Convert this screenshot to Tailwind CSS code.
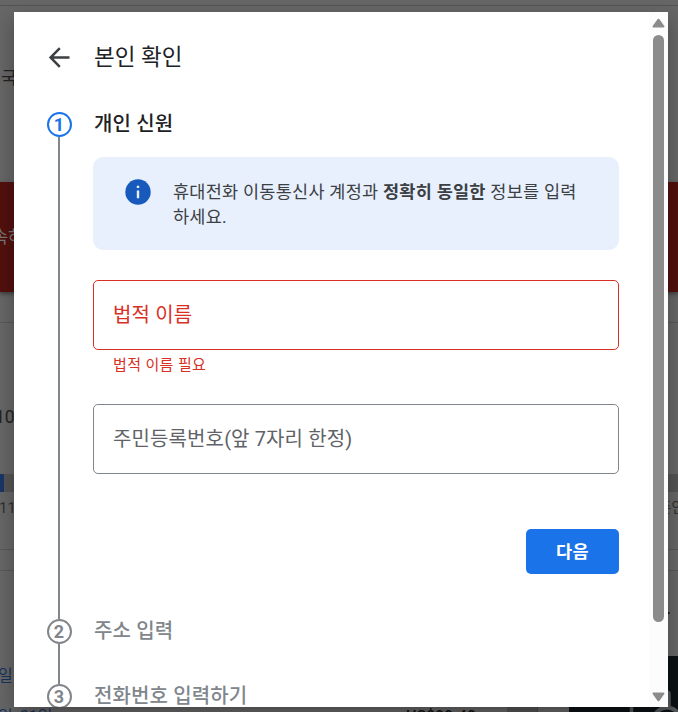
<!DOCTYPE html>
<html lang="ko">
<head>
<meta charset="utf-8">
<title>본인 확인</title>
<script src="https://cdn.jsdelivr.net/npm/@tailwindcss/browser@4"></script>
</head>
<body class="relative h-[712px] w-[678px] overflow-hidden bg-[#666] font-[Roboto,'Noto_Sans_CJK_KR',sans-serif]">

<!-- Dimmed page -->
<div aria-hidden="true" class="flex h-[712px] w-[678px] flex-col overflow-hidden whitespace-nowrap text-[#222]">
  <div class="h-[6px] shrink-0 border-b border-[#545454]"></div>
  <div class="flex h-[176px] shrink-0 items-start pt-[60px] pl-[1px] text-[17.5px] leading-[25px]">국</div>
  <div class="flex h-[110px] shrink-0 items-center bg-[#52100e] text-[17.5px] text-[#777] shadow-[0_2px_4px_rgba(0,0,0,0.4)]"><span class="-ml-[8px]">속하</span></div>
  <div class="h-[31px] shrink-0 border-b border-[#585858]"></div>
  <div class="flex h-[151px] shrink-0 items-start pt-[82px] text-[17.5px] leading-[25px]"><span class="-ml-[5px]">10</span></div>
  <div class="flex h-[18px] shrink-0 bg-[#545454]"><div class="w-[4px] bg-[#1a3566]"></div></div>
  <div class="flex h-[58px] shrink-0 items-start justify-between border-b border-[#585858] pt-[6px] text-[15px] leading-[20px] text-[#303030]"><span class="-ml-[1px]">11</span><span class="-mr-[7px] text-[15px]">존인</span></div>
  <div class="h-[21px] shrink-0 border-b border-[#585858]"></div>
  <div class="flex h-[85px] shrink-0 items-start justify-end pt-[27px] leading-[20px]"><span class="mr-[7px] text-[17.5px] text-[#111]">.</span></div>
  <div class="flex h-[56px] shrink-0">
    <div class="w-[507px] shrink-0 pt-[8px] text-[#16335f]">
      <div class="-ml-[2px] text-[16px] leading-[24px]">일</div>
      <div class="mt-[17px] flex justify-between text-[16px] leading-[24px]"><span class="-ml-[2px]">일, 31일</span><span class="mr-[31px] text-[16px] font-medium text-[#111]">US$99.40</span></div>
    </div>
    <div class="mt-[51px] h-[5px] w-[31px] border-r border-[#4a4a4a] bg-[#545454]"></div>
    <div class="ml-[31px] flex w-[109px] items-end justify-end bg-[#0c1115]">
      <svg class="h-[56px] w-[50px]" viewBox="0 0 50 56" fill="none" stroke="#56595b" stroke-width="4"><path d="M3.5 56V38q0-2 2-2H39q2 0 2 2v13" stroke-width="3.5"/><circle cx="39" cy="65" r="13.5"/></svg>
    </div>
  </div>
</div>

<!-- Dialog -->
<main class="absolute top-[12px] left-[14px] flex h-[695px] w-[654px] overflow-hidden bg-white shadow-[0_8px_18px_rgba(0,0,0,0.3)]">
  <div class="flex w-[635px] shrink-0 flex-col whitespace-nowrap pr-[30px] pl-[32px]">
    <header class="flex h-[90px] shrink-0 items-center gap-[22px]">
      <svg class="ml-[1px] h-[25px] w-[25px]" viewBox="0 0 25 25" fill="none" stroke="#3c4043" stroke-width="2.5"><path d="M22.5 12.5H4M12.8 3.2 3.6 12.5l9.2 9.3"/></svg>
      <h1 class="text-[22.5px] leading-[30px] text-[#202124]">본인 확인</h1>
    </header>

    <section class="flex h-[507px] shrink-0 gap-[21px]">
      <div class="flex w-[26px] shrink-0 flex-col items-center pt-[10px]">
        <span class="flex size-[25px] shrink-0 items-center justify-center rounded-full border-2 border-[#1a73e8] text-[18px] font-bold text-[#1a73e8]">1</span>
        <div class="-ml-[1px] w-[2px] grow bg-[#80868b]"></div>
      </div>
      <div class="flex w-[526px] flex-col">
        <h2 class="pt-[7px] pl-px text-[20px] leading-[30px] font-medium tracking-[0.125px] text-[#202124]">개인 신원</h2>
        <div class="mt-[18px] flex h-[93px] rounded-[10px] bg-[#e8f0fe] pt-[22px] pl-[32px]">
          <svg class="h-[26px] w-[26px] shrink-0" viewBox="0 0 26 26"><circle cx="13" cy="13" r="12.7" fill="#185abc"/><path d="M11.8 6.7h2.4v2.4h-2.4zM11.8 11.6h2.4v7.6h-2.4z" fill="#e8f0fe"/></svg>
          <p class="mt-px ml-[22px] text-[17.5px] leading-[25px] tracking-[0.25px] text-[#3c4043]">휴대전화 이동통신사 계정과 <b>정확히 동일한</b> 정보를 입력<br>하세요.</p>
        </div>
        <div class="mt-[30px] flex h-[70px] items-center rounded-[5px] border border-[#d93025] pl-[19px] text-[20px] tracking-[0.125px] text-[#d93025]">법적 이름</div>
        <p class="mt-[5px] h-[19px] pl-[20px] text-[15px] leading-[20px] tracking-[0.375px] text-[#d93025]">법적 이름 필요</p>
        <div class="mt-[30px] flex h-[70px] items-center rounded-[5px] border border-[#80868b] pl-[19px] text-[20px] tracking-[0.125px] text-[#5f6368]">주민등록번호(앞 7자리 한정)</div>
        <button class="mt-[55px] h-[45px] w-[93px] self-end rounded-[5px] bg-[#1a73e8] pt-[2px] text-[17.5px] font-bold tracking-[0.3px] text-white">다음</button>
      </div>
    </section>

    <section class="flex h-[65px] shrink-0 gap-[22px]">
      <div class="flex w-[26px] shrink-0 flex-col items-center">
        <div class="-ml-[1px] h-[10px] w-[2px] bg-[#80868b]"></div>
        <span class="flex size-[25px] shrink-0 items-center justify-center rounded-full border-2 border-[#80868b] text-[18px] font-bold text-[#80868b]">2</span>
        <div class="-ml-[1px] w-[2px] grow bg-[#80868b]"></div>
      </div>
      <h2 class="pt-[7px] text-[20px] leading-[30px] font-medium tracking-[0.125px] text-[#80868b]">주소 입력</h2>
    </section>

    <section class="flex h-[65px] shrink-0 gap-[22px]">
      <div class="flex w-[26px] shrink-0 flex-col items-center">
        <div class="-ml-[1px] h-[10px] w-[2px] bg-[#80868b]"></div>
        <span class="flex size-[25px] shrink-0 items-center justify-center rounded-full border-2 border-[#80868b] text-[18px] font-bold text-[#80868b]">3</span>
      </div>
      <h2 class="pt-[7px] text-[20px] leading-[30px] font-medium tracking-[0.125px] text-[#80868b]">전화번호 입력하기</h2>
    </section>
  </div>

  <!-- Scrollbar -->
  <div class="flex w-[19px] shrink-0 flex-col items-center bg-[#fcfcfc] pt-[6px]">
    <svg class="h-[10px] w-[13px] shrink-0" viewBox="0 0 13 10" fill="#8b8b8b" stroke="#8b8b8b" stroke-width="2" stroke-linejoin="round"><path d="M1.5 8.5 6.5 1.7l5 6.8z"/></svg>
    <div class="mt-[7px] h-[587px] w-[11px] shrink-0 rounded-full bg-[#8b8b8b]"></div>
    <svg class="mt-[70px] h-[10px] w-[13px] shrink-0" viewBox="0 0 13 10" fill="#8b8b8b" stroke="#8b8b8b" stroke-width="2" stroke-linejoin="round"><path d="M1.5 1.5 6.5 8.3l5-6.8z"/></svg>
  </div>
</main>
</body>
</html>
